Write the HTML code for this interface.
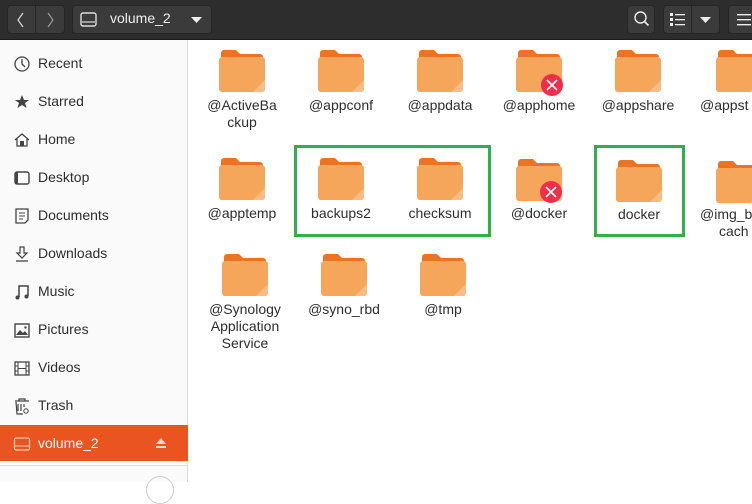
<!DOCTYPE html>
<html><head><meta charset="utf-8"><style>
*{margin:0;padding:0;box-sizing:border-box}
body{width:752px;height:482px;overflow:hidden;background:#fff;font-family:"Liberation Sans","DejaVu Sans",sans-serif;position:relative;color:#2e2e2e}
.hdr{position:absolute;left:0;top:0;width:752px;height:40px;background:#2d2d2d;border-bottom:1px solid #1c1c1c}
.btn{position:absolute;top:5px;height:29px;background:#3b3b3b;border:1px solid #262626;border-radius:4px}
.side{position:absolute;left:0;top:40px;width:188px;height:442px;background:#fafafa;border-right:1px solid #dcdcdc}
.it{position:absolute;left:0;width:188px;height:36px;font-size:14px;line-height:36px}
.it span{position:absolute;left:38px}
.it svg{position:absolute;left:13px;top:10px}
.f{position:absolute;width:46px;height:42px}
.l{position:absolute;width:96px;text-align:center;font-size:14px;line-height:17px;color:#2e2e2e}
.g{position:absolute;border:3px solid #2eb04a}
</style></head><body>
<svg width="0" height="0" style="position:absolute"><defs>
<symbol id="fd" viewBox="0 0 46 42"><path d="M2 3a3 3 0 0 1 3-3h12l4 4h20a3 3 0 0 1 3 3v8H2z" fill="#ea7424"/><rect x="0" y="7" width="46" height="35" rx="3" fill="#f5a65a"/><path d="M46 30v9a3 3 0 0 1-3 3h-9z" fill="#f8bd86"/></symbol>
<symbol id="x" viewBox="0 0 22 22"><circle cx="11" cy="11" r="11" fill="#ef2f4a"/><path d="M6 6l10 10M16 6L6 16" stroke="#fff" stroke-width="1.6"/></symbol>
</defs></svg>
<div class="hdr">
<div class="btn" style="left:7px;width:58px"></div>
<div style="position:absolute;left:35px;top:6px;width:1px;height:27px;background:#262626"></div>
<svg style="position:absolute;left:14px;top:11px" width="14" height="18"><path d="M9 2L4 9l5 7" stroke="#ddd" fill="none" stroke-width="1.2"/></svg>
<svg style="position:absolute;left:43px;top:11px" width="14" height="18"><path d="M5 2l5 7-5 7" stroke="#999" fill="none" stroke-width="1.2"/></svg>
<div class="btn" style="left:72px;width:140px"></div>
<svg style="position:absolute;left:80px;top:12px" width="18" height="16"><rect x="1" y="1" width="15" height="13" rx="2" stroke="#ddd" fill="none" stroke-width="1.4"/><path d="M2 10h13" stroke="#ddd" stroke-width="1.2"/></svg>
<div style="position:absolute;left:110px;top:10px;color:#eee;font-size:14px">volume_2</div>
<svg style="position:absolute;left:191px;top:17px" width="12" height="7"><path d="M0 0h11L5.5 6z" fill="#eee"/></svg>
<div class="btn" style="left:627px;width:28px"></div>
<svg style="position:absolute;left:633px;top:10px" width="18" height="18"><circle cx="7.5" cy="7.5" r="5.5" stroke="#eee" fill="none" stroke-width="1.4"/><path d="M11.5 11.5l4 4" stroke="#eee" stroke-width="1.6"/></svg>
<div class="btn" style="left:663px;width:57px"></div>
<div style="position:absolute;left:691px;top:6px;width:1px;height:27px;background:#262626"></div>
<svg style="position:absolute;left:670px;top:13px" width="16" height="14"><g fill="#eee"><rect x="0" y="0" width="3" height="3"/><rect x="0" y="5" width="3" height="3"/><rect x="0" y="10" width="3" height="3"/><rect x="5" y="1" width="10" height="1.3"/><rect x="5" y="6" width="10" height="1.3"/><rect x="5" y="11" width="10" height="1.3"/></g></svg>
<svg style="position:absolute;left:700px;top:17px" width="12" height="7"><path d="M0 0h11L5.5 6z" fill="#eee"/></svg>
<div class="btn" style="left:728px;width:40px"></div>
<svg style="position:absolute;left:737px;top:14px" width="14" height="12"><g fill="#eee"><rect y="0" width="14" height="1.4"/><rect y="5" width="14" height="1.4"/><rect y="10" width="14" height="1.4"/></g></svg>
</div>
<div class="side">
<div class="it" style="top:5px"><svg width="18" height="18"><circle cx="9" cy="9" r="7" fill="none" stroke="#444" stroke-width="1.3"/><path d="M9 4v5l3 3" stroke="#444" fill="none" stroke-width="1.3"/></svg><span>Recent</span></div>
<div class="it" style="top:43px"><svg width="18" height="18"><path d="M9 2l2 5h5l-4 3 1.6 5L9 12l-4.6 3L6 10 2 7h5z" fill="#444"/></svg><span>Starred</span></div>
<div class="it" style="top:81px"><svg width="18" height="18"><path d="M2 9l7-6 7 6M4 8v7h10V8" fill="none" stroke="#444" stroke-width="1.3"/><rect x="7" y="10" width="4" height="5" fill="#444"/></svg><span>Home</span></div>
<div class="it" style="top:119px"><svg width="18" height="18"><rect x="2" y="3" width="14" height="12" rx="2" fill="none" stroke="#444" stroke-width="1.4"/><rect x="2" y="3" width="3" height="12" fill="#444"/></svg><span>Desktop</span></div>
<div class="it" style="top:157px"><svg width="18" height="18"><path d="M3 2h12v11l-3 3H3z" fill="none" stroke="#444" stroke-width="1.3"/><path d="M6 6h6M6 9h6M6 12h4" stroke="#444"/></svg><span>Documents</span></div>
<div class="it" style="top:195px"><svg width="18" height="18"><path d="M7 2h4v6h3l-5 5-5-5h3z" fill="none" stroke="#444" stroke-width="1.2"/><path d="M3 16h12" stroke="#444" stroke-width="1.3"/></svg><span>Downloads</span></div>
<div class="it" style="top:233px"><svg width="18" height="18"><path d="M6 14V3h9v10" fill="none" stroke="#444" stroke-width="1.5"/><circle cx="4.5" cy="14.5" r="2" fill="#444"/><circle cx="13.5" cy="13.5" r="2" fill="#444"/></svg><span>Music</span></div>
<div class="it" style="top:271px"><svg width="18" height="18"><rect x="2" y="3" width="14" height="13" fill="none" stroke="#444" stroke-width="1.4"/><path d="M3 14l4-5 3 3 2-2 3 4z" fill="#444"/><circle cx="12.5" cy="6.5" r="1.2" fill="#444"/></svg><span>Pictures</span></div>
<div class="it" style="top:309px"><svg width="18" height="18"><rect x="2" y="3" width="14" height="13" fill="none" stroke="#444" stroke-width="1.3"/><path d="M5 3v13M13 3v13M2 7h3M2 12h3M13 7h3M13 12h3M5 9.5h8" stroke="#444"/></svg><span>Videos</span></div>
<div class="it" style="top:347px"><svg width="18" height="18"><path d="M2 4h14M6 4V2h6v2M3 5l1 12h6M5 7v7M8 7v7M11 7v3" fill="none" stroke="#444" stroke-width="1.2"/><circle cx="13" cy="14" r="2.2" fill="none" stroke="#444"/></svg><span>Trash</span></div>
<div class="it" style="top:385px;background:#e95420;color:#fff"><svg width="18" height="18"><rect x="1.5" y="3" width="15" height="12" rx="2" fill="none" stroke="#f8c8b0" stroke-width="1.3"/><path d="M2 11h14" stroke="#f8c8b0"/></svg><span style="color:#fff">volume_2</span>
<svg style="left:155px;top:13px" width="12" height="10"><path d="M1 6L6 0l5 6z M1 8h10v2H1z" fill="#f8d5c5"/></svg></div>
<div style="position:absolute;left:0;top:425px;width:188px;height:1px;background:#dedede"></div>
<div style="position:absolute;left:146px;top:436px;width:28px;height:28px;border:1px solid #ccc;border-radius:50%"></div>
</div>

<svg class="f" style="left:219px;top:50px"><use href="#fd"/></svg>
<svg class="f" style="left:318px;top:50px"><use href="#fd"/></svg>
<svg class="f" style="left:417px;top:50px"><use href="#fd"/></svg>
<svg class="f" style="left:516px;top:50px"><use href="#fd"/></svg>
<svg style="position:absolute;left:541px;top:74px" width="22" height="22"><use href="#x"/></svg>
<svg class="f" style="left:615px;top:50px"><use href="#fd"/></svg>
<svg class="f" style="left:716px;top:50px"><use href="#fd"/></svg>
<div class="l" style="left:194px;top:97px">@ActiveBa<br>ckup</div>
<div class="l" style="left:293px;top:97px">@appconf</div>
<div class="l" style="left:392px;top:97px">@appdata</div>
<div class="l" style="left:491px;top:97px">@apphome</div>
<div class="l" style="left:590px;top:97px">@appshare</div>
<div class="l" style="left:700px;top:97px;text-align:left">@appst</div>

<svg class="f" style="left:219px;top:158px"><use href="#fd"/></svg>
<svg class="f" style="left:318px;top:158px"><use href="#fd"/></svg>
<svg class="f" style="left:417px;top:158px"><use href="#fd"/></svg>
<svg class="f" style="left:516px;top:159px"><use href="#fd"/></svg>
<svg style="position:absolute;left:540px;top:181px" width="22" height="22"><use href="#x"/></svg>
<svg class="f" style="left:616px;top:160px"><use href="#fd"/></svg>
<svg class="f" style="left:716px;top:161px"><use href="#fd"/></svg>
<div class="l" style="left:194px;top:205px">@apptemp</div>
<div class="l" style="left:293px;top:205px">backups2</div>
<div class="l" style="left:392px;top:205px">checksum</div>
<div class="l" style="left:491px;top:205px">@docker</div>
<div class="l" style="left:591px;top:206px">docker</div>
<div class="l" style="left:700px;top:206px;text-align:left">@img_b<br><span style="padding-left:19px">cach</span></div>

<svg class="f" style="left:222px;top:254px"><use href="#fd"/></svg>
<svg class="f" style="left:321px;top:254px"><use href="#fd"/></svg>
<svg class="f" style="left:420px;top:254px"><use href="#fd"/></svg>
<div class="l" style="left:197px;top:301px">@Synology<br>Application<br>Service</div>
<div class="l" style="left:296px;top:301px">@syno_rbd</div>
<div class="l" style="left:395px;top:301px">@tmp</div>

<div class="g" style="left:294px;top:145px;width:197px;height:92px"></div>
<div class="g" style="left:594px;top:145px;width:91px;height:92px"></div>
</body></html>
